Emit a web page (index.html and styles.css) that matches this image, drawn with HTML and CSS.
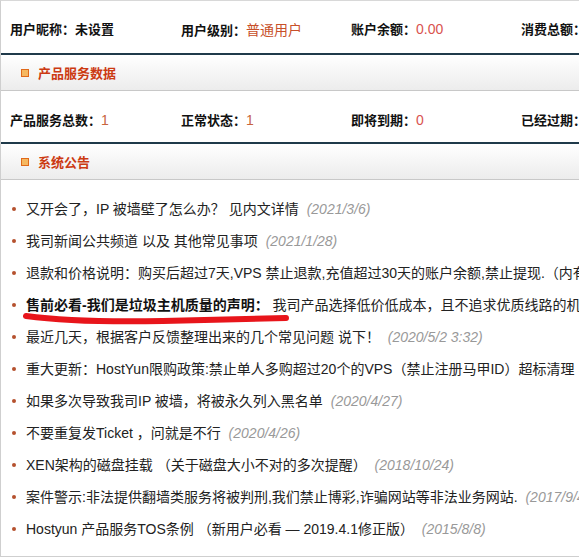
FILE: index.html
```html
<!DOCTYPE html>
<html lang="zh-CN">
<head>
<meta charset="utf-8">
<link rel="stylesheet" href="styles.css">
</head>
<body>
<div class="panel">
  <div class="stats stats1">
    <div class="stat"><b>用户昵称：</b><b>未设置</b></div>
    <div class="stat"><b>用户级别：</b><span class="v orange">普通用户</span></div>
    <div class="stat"><b>账户余额：</b><span class="v red">0.00</span></div>
    <div class="stat"><b>消费总额：</b></div>
  </div>
  <div class="head"><span class="ico"></span><span class="title">产品服务数据</span></div>
  <div class="stats stats2">
    <div class="stat"><b>产品服务总数：</b><span class="v brown">1</span></div>
    <div class="stat"><b>正常状态：</b><span class="v brown">1</span></div>
    <div class="stat"><b>即将到期：</b><span class="v red">0</span></div>
    <div class="stat"><b>已经过期：</b></div>
  </div>
  <div class="head"><span class="ico"></span><span class="title">系统公告</span></div>
  <ul class="news">
    <li>又开会了，IP 被墙壁了怎么办？ 见内文详情 <em>(2021/3/6)</em></li>
    <li>我司新闻公共频道 以及 其他常见事项 <em>(2021/1/28)</em></li>
    <li>退款和价格说明：购买后超过7天,VPS 禁止退款,充值超过30天的账户余额,禁止提现.（内有说明） <em>(2020/6/1)</em></li>
    <li class="marked"><strong>售前必看-我们是垃圾主机质量的声明：</strong> 我司产品选择低价低成本，且不追求优质线路的机房 <em>(2020/5/20)</em>
      <svg class="scribble" width="268" height="14" viewBox="0 0 268 14"><path d="M3 5 C 40 10, 90 11, 140 10 C 190 9, 235 8, 263 7" fill="none" stroke="#e8151b" stroke-width="6" stroke-linecap="round"/></svg>
    </li>
    <li>最近几天，根据客户反馈整理出来的几个常见问题 说下！ <em>(2020/5/2 3:32)</em></li>
    <li>重大更新：HostYun限购政策:禁止单人多购超过20个的VPS（禁止注册马甲ID）超标清理 <em>(2020/4/28)</em></li>
    <li>如果多次导致我司IP 被墙，将被永久列入黑名单 <em>(2020/4/27)</em></li>
    <li>不要重复发Ticket ，问就是不行 <em>(2020/4/26)</em></li>
    <li>XEN架构的磁盘挂载 （关于磁盘大小不对的多次提醒） <em>(2018/10/24)</em></li>
    <li>案件警示:非法提供翻墙类服务将被判刑,我们禁止博彩,诈骗网站等非法业务网站. <em>(2017/9/4)</em></li>
    <li>Hostyun 产品服务TOS条例 （新用户必看 — 2019.4.1修正版） <em>(2015/8/8)</em></li>
  </ul>
</div>
</body>
</html>
```
FILE: styles.css
```css
html, body {
  margin: 0;
  padding: 0;
  background: #fff;
}
body {
  font-family: "Liberation Sans", "Noto Sans CJK SC", sans-serif;
  color: #222;
  width: 579px;
  height: 557px;
  overflow: hidden;
}
.panel {
  border-top: 1px solid #d8d8d8;
  border-left: 1px solid #cfcfcf;
  border-bottom: 1px solid #cfcfcf;
  height: 555px;
  overflow: hidden;
}
.stats {
  display: grid;
  grid-template-columns: 171px 170px 170px 170px;
  padding-left: 9px;
  box-sizing: border-box;
  align-items: center;
  border-bottom: 2px solid #1f3a4a;
  white-space: nowrap;
  font-size: 13px;
}
.stats1 {
  height: 54px;
  padding-top: 3px;
}
.stats2 {
  height: 53px;
  padding-top: 5px;
}
.stat b {
  font-weight: bold;
  color: #111;
}
.v {
  font-size: 14px;
}
.orange { color: #c8502a; }
.red { color: #d9534f; }
.brown { color: #c8643c; }
.head {
  height: 35px;
  display: flex;
  align-items: center;
  background: linear-gradient(#ffffff, #ececec);
  border-bottom: 1px solid #c8c8c8;
  padding-left: 20px;
}
.ico {
  width: 6px;
  height: 6px;
  border: 1px solid #e06a1a;
  background: #f5b861;
  margin-right: 9px;
}
.title {
  font-size: 13px;
  font-weight: bold;
  color: #cc3a12;
}
.news {
  list-style: none;
  margin: 0;
  padding: 13px 0 0 0;
}
.news li {
  position: relative;
  height: 32px;
  line-height: 32px;
  font-size: 14px;
  white-space: nowrap;
  padding-left: 25px;
  color: #222;
}
.news li::before {
  content: "";
  position: absolute;
  left: 11px;
  top: 14px;
  width: 4px;
  height: 4px;
  border-radius: 50%;
  background: #b5512e;
}
.news em {
  color: #999;
  font-style: italic;
  margin-left: 4px;
}
.news strong {
  font-weight: bold;
  color: #111;
}
.scribble {
  position: absolute;
  left: 22px;
  top: 22px;
}
```
